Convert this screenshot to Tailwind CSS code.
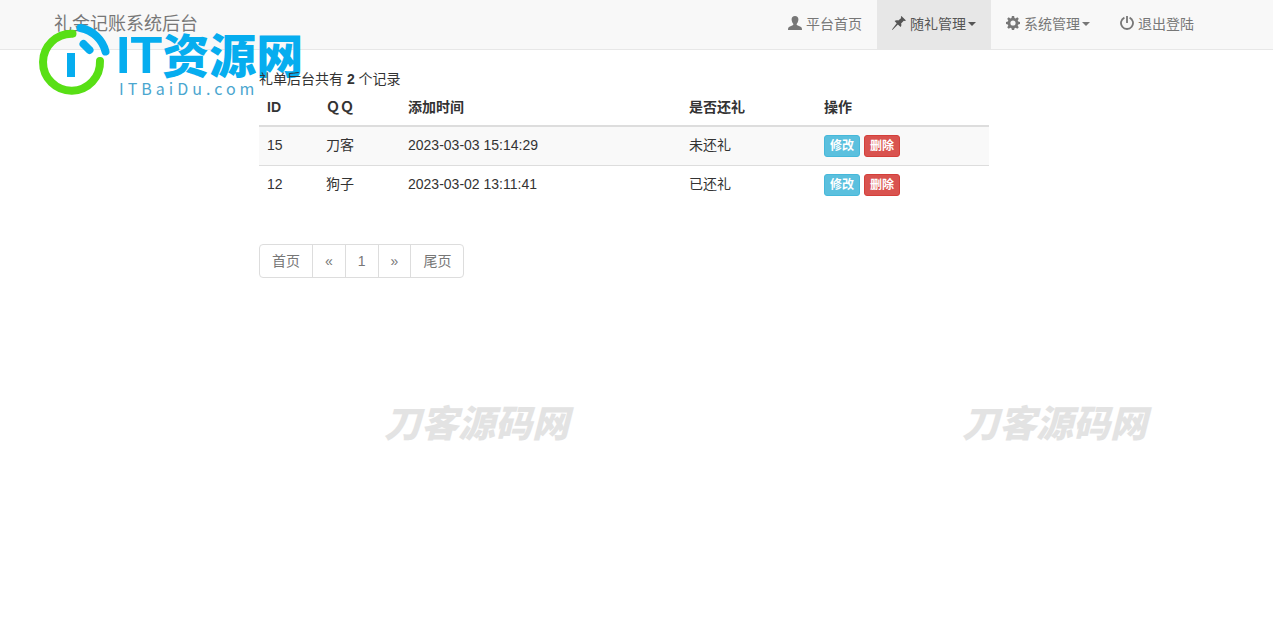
<!DOCTYPE html>
<html lang="zh-CN">
<head>
<meta charset="utf-8">
<meta name="viewport" content="width=device-width, initial-scale=1">
<title>礼金记账系统后台</title>
<script src="https://cdn.jsdelivr.net/npm/@tailwindcss/browser@4"></script>
</head>
<body class="relative min-h-screen bg-white font-['Liberation_Sans','Noto_Sans_CJK_SC',sans-serif] text-[14px] leading-5 text-[#333]">

<header class="border-b border-[#e7e7e7] bg-[#f8f8f8] pr-[25px]">
  <nav class="mx-auto flex max-w-[1170px] items-start justify-between">
    <a href="#" class="px-[15px] pt-[14px] text-[18px] leading-5 text-[#777]">礼金记账系统后台</a>
    <ul class="flex leading-5 text-[#777]">
      <li><a href="#" class="flex h-[49px] items-start gap-1 px-[15px] pt-[14px]">
        <svg class="mt-0.5 size-3.5" viewBox="0 0 14 14" fill="currentColor" aria-hidden="true"><path d="M7 0C4.800 0 3.600 1.300 3.600 3.300c0 1.300.4 2.900 1.400 4.100.6.800.4 1.500-.3 1.900L1.400 10.800C.4 11.300 0 12 0 14h14c0-2-.4-2.700-1.400-3.200L9.300 9.300c-.7-.4-.9-1.100-.3-1.900 1-1.200 1.400-2.800 1.400-4.100C10.400 1.300 9.200 0 7 0z"/></svg>
        <span>平台首页</span></a></li>
      <li><a href="#" class="flex h-[49px] items-start gap-1 bg-[#e7e7e7] px-[15px] pt-[14px] text-[#555]">
        <svg class="mt-0.5 size-3.5" viewBox="0 0 14 14" fill="currentColor" aria-hidden="true"><path d="M9.400 0 14 4.600l-1.300.5-.9-.4-2.700 2.800c.5 1.500.3 2.700-.5 3.500L5.900 8.400.4 13.900 0 13.500 4.700 7.200 2.600 5.100c.9-.8 2.300-1 3.700-.5L9.200 2l-.4-.9z"/></svg>
        <span class="flex items-center gap-0.5">随礼管理<svg class="h-1 w-2" viewBox="0 0 8 4" fill="currentColor" aria-hidden="true"><path d="M0 0h8L4 4z"/></svg></span></a></li>
      <li><a href="#" class="flex h-[49px] items-start gap-1 px-[15px] pt-[14px]">
        <svg class="mt-0.5 size-3.5" viewBox="0 0 14 14" fill="currentColor" aria-hidden="true"><path fill-rule="evenodd" d="M5.900 0h2.200l.4 1.900 1.100.5 1.700-1.100 1.500 1.500-1.100 1.700.5 1.100 1.800.4v2.100l-1.800.4-.5 1.200 1.100 1.600-1.500 1.500-1.700-1-1.100.4L8.100 14H5.900l-.4-1.800-1.100-.4-1.700 1-1.500-1.500 1.100-1.600-.5-1.200L0 8.100V6l1.800-.4.500-1.100-1.100-1.700 1.500-1.500 1.700 1.100 1.100-.5zM7 4.400a2.600 2.600 0 1 0 0 5.200 2.600 2.600 0 0 0 0-5.200z"/></svg>
        <span class="flex items-center gap-0.5">系统管理<svg class="h-1 w-2" viewBox="0 0 8 4" fill="currentColor" aria-hidden="true"><path d="M0 0h8L4 4z"/></svg></span></a></li>
      <li><a href="#" class="flex h-[49px] items-start gap-1 px-[15px] pt-[14px]">
        <svg class="mt-0.5 size-3.5" viewBox="0 0 14 14" fill="none" stroke="currentColor" stroke-width="1.800" aria-hidden="true"><path d="M4.400 1.600a6 6 0 1 0 5.200 0M7 0v7"/></svg>
        <span>退出登陆</span></a></li>
    </ul>
  </nav>
</header>

<main class="relative z-10 pr-[25px]">
  <div class="mx-auto max-w-[730px] pt-[19px]">
    <p>礼单后台共有 <b>2</b> 个记录</p>
    <table class="w-full border-collapse text-left">
      <thead>
        <tr class="border-b-2 border-[#ddd]">
          <th class="w-[59px] p-2">ID</th>
          <th class="w-[82px] p-2">ＱＱ</th>
          <th class="w-[281px] p-2">添加时间</th>
          <th class="w-[135px] p-2">是否还礼</th>
          <th class="w-[173px] p-2">操作</th>
        </tr>
      </thead>
      <tbody>
        <tr class="border-b border-[#ddd] bg-[#f9f9f9] align-top">
          <td class="p-2">15</td><td class="p-2">刀客</td><td class="p-2">2023-03-03 15:14:29</td><td class="p-2">未还礼</td>
          <td class="p-2"><div class="flex gap-1 text-[12px] leading-[18px] font-bold text-white">
            <button type="button" class="rounded-[3px] border border-[#46b8da] bg-[#5bc0de] px-[5px] py-px">修改</button>
            <button type="button" class="rounded-[3px] border border-[#d43f3a] bg-[#d9534f] px-[5px] py-px">删除</button></div></td>
        </tr>
        <tr class="align-top">
          <td class="p-2">12</td><td class="p-2">狗子</td><td class="p-2">2023-03-02 13:11:41</td><td class="p-2">已还礼</td>
          <td class="p-2"><div class="flex gap-1 text-[12px] leading-[18px] font-bold text-white">
            <button type="button" class="rounded-[3px] border border-[#46b8da] bg-[#5bc0de] px-[5px] py-px">修改</button>
            <button type="button" class="rounded-[3px] border border-[#d43f3a] bg-[#d9534f] px-[5px] py-px">删除</button></div></td>
        </tr>
      </tbody>
    </table>
    <nav class="mt-10 flex" aria-label="分页">
      <ul class="flex divide-x divide-[#ddd] rounded-[4px] border border-[#ddd] bg-white text-[#777]">
        <li><a href="#" class="block px-3 py-1.5">首页</a></li>
        <li><a href="#" class="block px-3 py-1.5">«</a></li>
        <li><a href="#" class="block px-3 py-1.5">1</a></li>
        <li><a href="#" class="block px-3 py-1.5">»</a></li>
        <li><a href="#" class="block px-3 py-1.5">尾页</a></li>
      </ul>
    </nav>
  </div>
</main>

<!-- Site logo floating over the header -->
<div class="pointer-events-none absolute top-[22px] left-[38px] flex">
  <svg class="h-[74px] w-[74px]" viewBox="0 0 74 74" fill="none" stroke-linecap="round" aria-hidden="true">
    <path d="M34.500 11.700A28.500 28.500 0 1 0 62 39" stroke="#58df15" stroke-width="8"/>
    <path d="M42.500 6A32 32 0 0 1 67.500 29.500" stroke="#06adef" stroke-width="8"/>
    <path d="M45.500 22 51.500 28" stroke="#06adef" stroke-width="8"/>
    <path d="M29 31h8v24h-8z" fill="#06adef"/>
  </svg>
  <div class="flex flex-col pt-1 pl-1 font-['Noto_Sans_CJK_SC',sans-serif] whitespace-nowrap">
    <span class="flex items-center text-[47px] leading-[50px] font-black text-[#06adef]"><span class="pt-1 text-[52px] font-bold font-['Liberation_Sans',sans-serif]">IT</span>资源网</span>
    <span class="pl-[3px] text-[16px] leading-4 tracking-[4px] text-[#4ba6cf]">ITBaiDu.com</span>
  </div>
</div>

<!-- Background watermarks -->
<div class="pointer-events-none absolute top-[401px] left-[384px] font-['Noto_Sans_CJK_SC',sans-serif] text-[37px] leading-10 font-black whitespace-nowrap text-[#e3e3e3] italic">刀客源码网</div>
<div class="pointer-events-none absolute top-[401px] left-[962px] font-['Noto_Sans_CJK_SC',sans-serif] text-[37px] leading-10 font-black whitespace-nowrap text-[#e3e3e3] italic">刀客源码网</div>
</body>
</html>
